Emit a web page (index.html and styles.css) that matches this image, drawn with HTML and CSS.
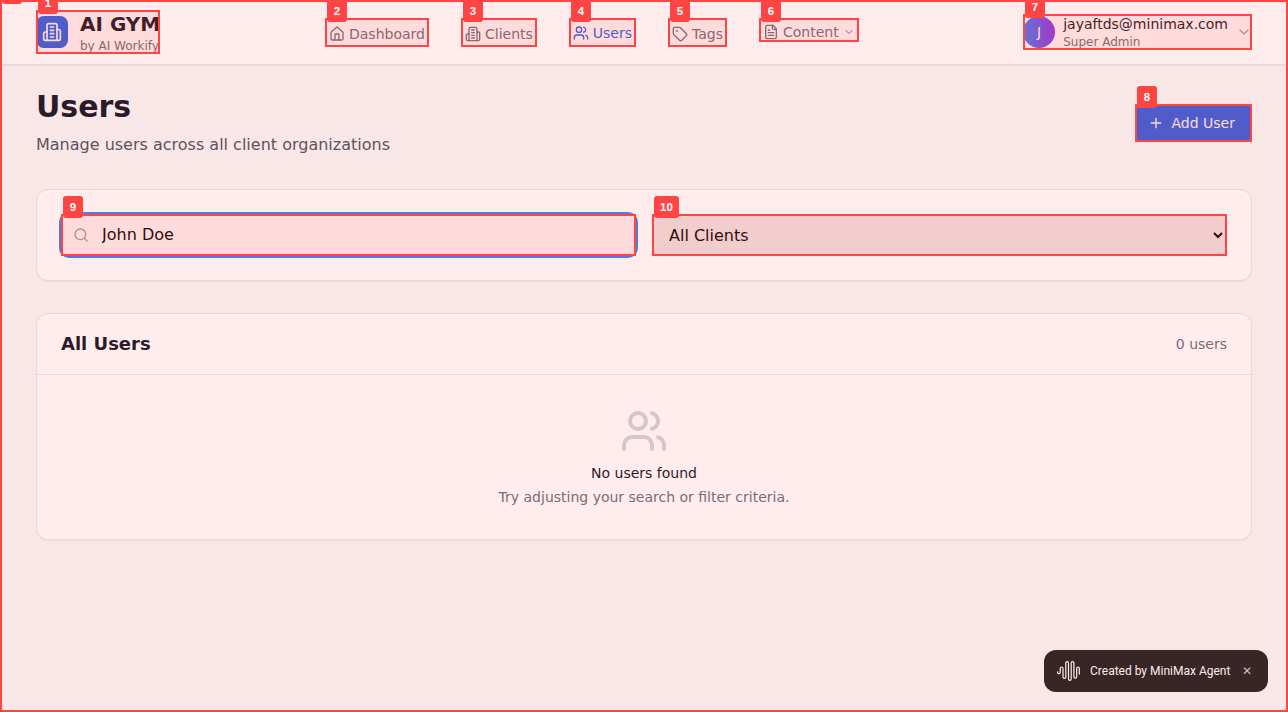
FILE: index.html
```html
<!DOCTYPE html>
<html lang="en">
<head>
<meta charset="utf-8">
<title>AI GYM - Users</title>
<link rel="stylesheet" href="styles.css">
</head>
<body>
<svg class="sprite" aria-hidden="true">
  <symbol id="building" viewBox="0 0 24 24"><path d="M6 22V4a2 2 0 0 1 2-2h8a2 2 0 0 1 2 2v18Z"/><path d="M6 12H4a2 2 0 0 0-2 2v6a2 2 0 0 0 2 2h2M18 9h2a2 2 0 0 1 2 2v9a2 2 0 0 1-2 2h-2M10 6h4M10 10h4M10 14h4M10 18h4"/></symbol>
  <symbol id="home" viewBox="0 0 24 24"><path d="M15 21v-8a1 1 0 0 0-1-1h-4a1 1 0 0 0-1 1v8"/><path d="M3 10a2 2 0 0 1 .709-1.528l7-5.999a2 2 0 0 1 2.582 0l7 5.999A2 2 0 0 1 21 10v9a2 2 0 0 1-2 2H5a2 2 0 0 1-2-2z"/></symbol>
  <symbol id="users" viewBox="0 0 24 24"><path d="M16 21v-2a4 4 0 0 0-4-4H6a4 4 0 0 0-4 4v2"/><circle cx="9" cy="7" r="4"/><path d="M22 21v-2a4 4 0 0 0-3-3.87M16 3.13a4 4 0 0 1 0 7.75"/></symbol>
  <symbol id="tag" viewBox="0 0 24 24"><path d="M12.586 2.586A2 2 0 0 0 11.172 2H4a2 2 0 0 0-2 2v7.172a2 2 0 0 0 .586 1.414l8.704 8.704a2.426 2.426 0 0 0 3.42 0l6.58-6.58a2.426 2.426 0 0 0 0-3.42z"/><circle cx="7.5" cy="7.5" r=".5" fill="currentColor"/></symbol>
  <symbol id="file" viewBox="0 0 24 24"><path d="M15 2H6a2 2 0 0 0-2 2v16a2 2 0 0 0 2 2h12a2 2 0 0 0 2-2V7Z"/><path d="M14 2v4a2 2 0 0 0 2 2h4M10 9H8M16 13H8M16 17H8"/></symbol>
  <symbol id="chevron" viewBox="0 0 24 24"><path d="m6 9 6 6 6-6"/></symbol>
  <symbol id="plus" viewBox="0 0 24 24"><path d="M5 12h14M12 5v14"/></symbol>
  <symbol id="search" viewBox="0 0 24 24"><circle cx="11" cy="11" r="8"/><path d="m21 21-4.3-4.3"/></symbol>
</svg>

<header class="header">
  <div class="container header-row">
    <a class="brand">
      <span class="brand-mark"><svg class="icon icon-20"><use href="#building"/></svg></span>
      <span class="brand-text"><span class="brand-name">AI GYM</span><span class="brand-sub">by AI Workify</span></span>
    </a>
    <nav class="nav">
      <a class="nav-item"><svg class="icon"><use href="#home"/></svg>Dashboard</a>
      <a class="nav-item"><svg class="icon"><use href="#building"/></svg>Clients</a>
      <a class="nav-item active"><svg class="icon"><use href="#users"/></svg>Users</a>
      <a class="nav-item"><svg class="icon"><use href="#tag"/></svg>Tags</a>
      <a class="nav-item menu"><svg class="icon"><use href="#file"/></svg>Content<svg class="icon icon-12"><use href="#chevron"/></svg></a>
    </nav>
    <div class="account">
      <span class="avatar">J</span>
      <span class="account-text"><span class="account-name">jayaftds@minimax.com</span><span class="account-role">Super Admin</span></span>
      <svg class="icon muted"><use href="#chevron"/></svg>
    </div>
  </div>
</header>

<main class="container main">
  <div class="page-head">
    <div>
      <h1 class="title">Users</h1>
      <p class="subtitle">Manage users across all client organizations</p>
    </div>
    <button class="add"><svg class="icon"><use href="#plus"/></svg>Add User</button>
  </div>
  <section class="card filters">
    <label class="search"><svg class="icon muted"><use href="#search"/></svg><input class="search-input" type="text" value="John Doe"></label>
    <select class="client-select"><option>All Clients</option></select>
  </section>
  <section class="card">
    <div class="card-head"><h2 class="card-title">All Users</h2><span class="count">0 users</span></div>
    <div class="empty">
      <svg class="icon icon-48"><use href="#users"/></svg>
      <h3 class="empty-title">No users found</h3>
      <p class="empty-text">Try adjusting your search or filter criteria.</p>
    </div>
  </section>
</main>

<div class="badge">
  <svg class="badge-logo" viewBox="0 0 24 20"><path d="M.6 10.8v.6a1.3 1.3 0 0 0 2.6 0V7.4a1.4 1.4 0 0 1 2.8 0v8.6a1.4 1.4 0 0 0 2.8 0V2a1.35 1.35 0 0 1 2.7 0v16a1.35 1.35 0 0 0 2.7 0V2a1.35 1.35 0 0 1 2.7 0v13.7a1.4 1.4 0 0 0 2.8 0V7.3a1.3 1.3 0 0 1 2.6 0v5.8"/></svg>
  <span>Created by MiniMax Agent</span><span class="badge-close">✕</span>
</div>

<div class="mark mark-0"><b class="mark-label">0</b></div>
<div class="mark mark-1"><b class="mark-label">1</b></div>
<div class="mark mark-2"><b class="mark-label">2</b></div>
<div class="mark mark-3"><b class="mark-label">3</b></div>
<div class="mark mark-4"><b class="mark-label">4</b></div>
<div class="mark mark-5"><b class="mark-label">5</b></div>
<div class="mark mark-6"><b class="mark-label">6</b></div>
<div class="mark mark-7"><b class="mark-label">7</b></div>
<div class="mark mark-8"><b class="mark-label">8</b></div>
<div class="mark mark-9"><b class="mark-label">9</b></div>
<div class="mark mark-10"><b class="mark-label">10</b></div>
</body>
</html>
```
FILE: styles.css
```css
* { box-sizing: border-box; }
body { margin: 0; height: 712px; overflow: hidden; position: relative; background: #f9fafb; color: #111827; font-family: "DejaVu Sans", sans-serif; font-size: 14px; line-height: 20px; }
h1, h2, h3, p { margin: 0; }
.sprite { position: absolute; width: 0; height: 0; }
.icon { width: 16px; height: 16px; flex: none; fill: none; stroke: currentColor; stroke-width: 2; stroke-linecap: round; stroke-linejoin: round; }
.icon-12 { width: 12px; height: 12px; }
.icon-20 { width: 20px; height: 20px; }
.icon-48 { width: 48px; height: 48px; color: #d1d5db; }
.muted { color: #9ca3af; }
.container { width: 1216px; margin: 0 auto; }

.header { height: 65px; background: #fff; border-bottom: 1px solid #e5e7eb; box-shadow: 0 1px 2px rgba(0,0,0,.05); }
.header-row { display: grid; grid-template-columns: 289px 1fr auto; align-items: center; height: 64px; }
.brand { display: flex; align-items: center; gap: 12px; }
.brand-mark { display: grid; place-items: center; width: 32px; height: 32px; border-radius: 8px; background: #2563eb; color: #fff; }
.brand-text, .account-text { display: flex; flex-direction: column; white-space: nowrap; }
.brand-name { font-size: 20px; line-height: 28px; font-weight: 700; }
.brand-sub, .account-role { font-size: 12px; line-height: 16px; color: #6b7280; }
.nav { display: flex; gap: 32px; height: 28px; }
.nav-item { display: flex; align-items: center; gap: 4px; height: 32px; padding: 0 4px; color: #6b7280; }
.nav-item.active { height: 30px; color: #2563eb; }
.nav-item.menu { height: 28px; }
.account { display: flex; align-items: center; gap: 8px; }
.account-name { line-height: 20px; }
.avatar { display: grid; place-items: center; width: 32px; height: 32px; border-radius: 50%; background: linear-gradient(90deg, #3b82f6, #9333ea); color: #fff; }

.main { padding-top: 24px; }
.page-head { display: flex; justify-content: space-between; align-items: center; height: 68px; margin-bottom: 32px; }
.title { font-size: 30px; line-height: 36px; font-weight: 700; }
.subtitle { margin-top: 8px; font-size: 16px; line-height: 24px; color: #4b5563; }
.add { display: flex; align-items: center; gap: 8px; width: 117px; height: 38px; padding: 0 0 0 12.5px; border: 0; border-radius: 8px; background: #2563eb; color: #fff; font: inherit; }
.card { background: #fff; border: 1px solid #e5e7eb; border-radius: 12px; box-shadow: 0 1px 2px rgba(0,0,0,.05); margin-bottom: 32px; }
.filters { display: grid; grid-template-columns: 575px 575px; gap: 16px; height: 92px; padding: 24px; }
.search { display: flex; align-items: center; gap: 13px; height: 42px; padding-left: 12px; border-radius: 8px; background: #fff; box-shadow: 0 0 0 2px #3b82f6; }
.search-input { flex: 1; height: 24px; padding: 0; border: 0; outline: 0; background: none; font: 16px/24px "DejaVu Sans", sans-serif; color: #000; }
.client-select { height: 42px; padding: 0 0 0 12px; border: 1px solid #d1d5db; border-radius: 8px; background-color: #efefef; color: #000; font: 16px/24px "DejaVu Sans", sans-serif; }
.card-head { display: flex; align-items: center; justify-content: space-between; height: 61px; padding: 0 24px; border-bottom: 1px solid #e5e7eb; }
.card-title { font-size: 18px; line-height: 28px; font-weight: 600; }
.count, .empty-text { color: #6b7280; }
.empty { display: flex; flex-direction: column; align-items: center; height: 164px; padding-top: 32px; }
.empty-title { margin-top: 8px; font-size: 14px; font-weight: 400; }
.empty-text { margin-top: 4px; }

.badge { position: absolute; left: 1044px; top: 650px; width: 224px; height: 42px; display: flex; align-items: center; padding-left: 13px; border-radius: 12px; background: #222; color: #fff; font: 400 12px/18px Roboto, sans-serif; white-space: nowrap; }
.badge-logo { width: 24px; height: 20px; margin-right: 9px; fill: none; stroke: currentColor; stroke-width: 1.2; stroke-linecap: round; }
.badge-close { margin-left: 12px; font-size: 12px; color: #ccc; }

.mark { position: absolute; border: 2px solid #f44; background: rgba(255,68,68,.1); }
.mark-label { position: absolute; left: 0; top: -20px; height: 22px; min-width: 20px; padding: 0 6px; border-radius: 3px; background: #f44; color: #fff; text-align: center; font: bold 11.5px/22px "Liberation Sans", sans-serif; }
.mark-0 { left: 0; top: 0; width: 1288px; height: 712px; }
.mark-1 { left: 36px; top: 10px; width: 124px; height: 44px; }
.mark-2 { left: 325px; top: 18px; width: 104px; height: 29px; }
.mark-3 { left: 461px; top: 18px; width: 76px; height: 29px; }
.mark-4 { left: 569px; top: 18px; width: 67px; height: 29px; }
.mark-5 { left: 668px; top: 18px; width: 59px; height: 29px; }
.mark-6 { left: 759px; top: 18px; width: 100px; height: 24px; }
.mark-7 { left: 1023px; top: 14px; width: 229px; height: 36px; }
.mark-8 { left: 1135px; top: 104px; width: 117px; height: 38px; }
.mark-9 { left: 61px; top: 214px; width: 575px; height: 42px; }
.mark-10 { left: 652px; top: 214px; width: 575px; height: 42px; }
```
